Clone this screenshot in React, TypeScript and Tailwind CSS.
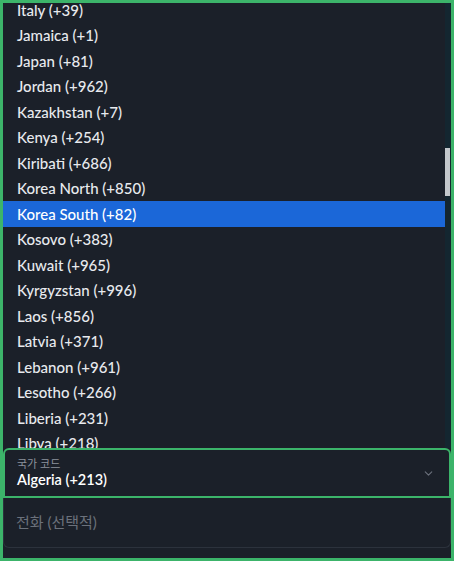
import { ChevronDown } from "lucide-react";

const countries = [
	"Italy (+39)",
	"Jamaica (+1)",
	"Japan (+81)",
	"Jordan (+962)",
	"Kazakhstan (+7)",
	"Kenya (+254)",
	"Kiribati (+686)",
	"Korea North (+850)",
	"Korea South (+82)",
	"Kosovo (+383)",
	"Kuwait (+965)",
	"Kyrgyzstan (+996)",
	"Laos (+856)",
	"Latvia (+371)",
	"Lebanon (+961)",
	"Lesotho (+266)",
	"Liberia (+231)",
	"Libya (+218)",
];

const selected = "Korea South (+82)";

export default function App() {
	return (
		<div
			className="flex h-[561px] w-[454px] flex-col overflow-hidden border-[3px] border-[#3cb46a] bg-[#1b2029] text-[#e8eaee]"
			style={{ fontFamily: "Lato, 'Noto Sans CJK KR', sans-serif" }}
		>
			<div className="flex h-[445px] shrink-0 overflow-hidden">
				<ul className="-mt-[6px] flex-1">
					{countries.map((name) => (
						<li
							key={name}
							className={`flex h-[25.5px] items-center pl-[14px] text-[15px] font-medium ${
								name === selected ? "bg-[#1b67d8] text-white" : ""
							}`}
						>
							{name}
						</li>
					))}
				</ul>
				<div className="w-[6px] bg-[#142630]">
					<div className="mt-[145px] h-[48px] w-[5px] bg-[#c3c7cb]" />
				</div>
			</div>

			<div className="flex h-[50px] shrink-0 items-center justify-between rounded-t-[6px] border-2 border-[#3cb46a] bg-[#1b2029] pl-[12px] pr-[14px]">
				<div className="flex flex-col">
					<span className="text-[11px] leading-[14px] text-[#8c929c]">국가 코드</span>
					<span className="text-[14.5px] leading-[18px] font-semibold text-white">Algeria (+213)</span>
				</div>
				<ChevronDown className="h-[13px] w-[13px] text-[#6b717c]" strokeWidth={2} />
			</div>

			<div className="flex h-[50px] shrink-0 items-center rounded-b-[6px] border border-t-0 border-[#2c323c] pl-[12px]">
				<span className="text-[15px] text-[#6b717b]">전화 (선택적)</span>
			</div>
		</div>
	);
}
